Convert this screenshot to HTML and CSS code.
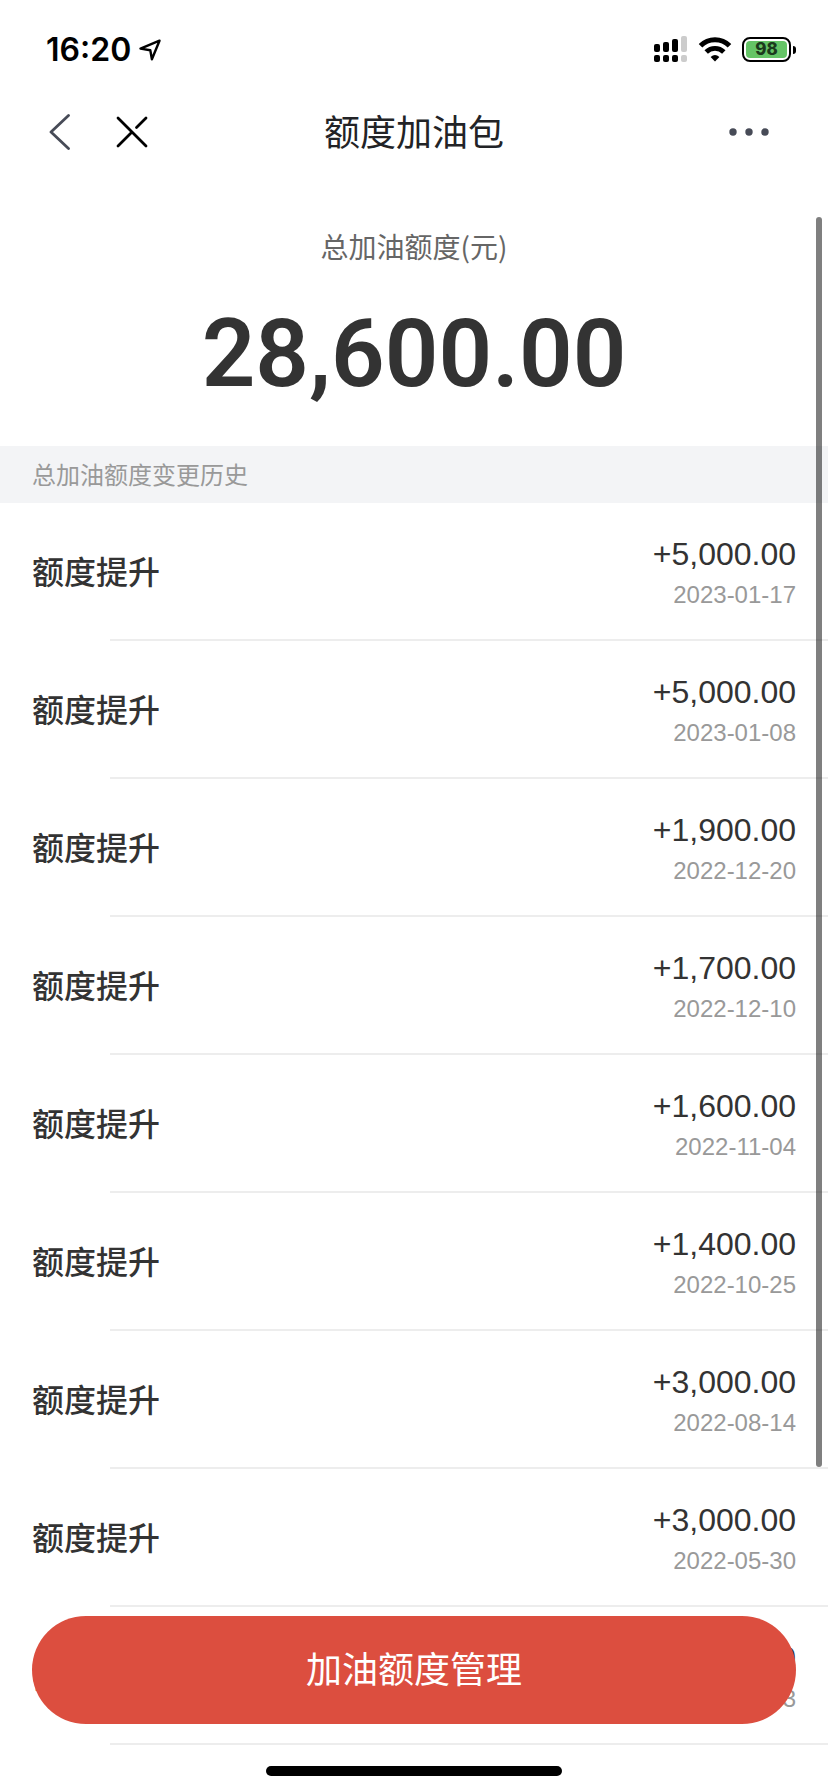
FILE: index.html
```html
<!DOCTYPE html>
<html lang="zh-CN">
<head>
<meta charset="utf-8">
<meta name="viewport" content="width=device-width, initial-scale=1">
<title>额度加油包</title>
<link rel="stylesheet" href="styles.css">
</head>
<body>
<div class="status-bar">
  <div class="status-left">
    <span class="time">16:20</span>
    <svg class="icon" width="24" height="24" viewBox="0 0 24 24" aria-hidden="true"><path d="M21.5 2.7 2.5 10.6 12.3 12.3 13.9 21.2Z" fill="none" stroke="#000" stroke-width="2.4" stroke-linejoin="round"/></svg>
  </div>
  <div class="status-right">
    <svg class="icon" width="34" height="26" viewBox="0 0 34 26" aria-hidden="true">
      <rect x="0" y="8" width="6" height="8" rx="2"/><rect x="9" y="6" width="6" height="10" rx="2"/><rect x="18" y="3" width="6" height="13" rx="2"/><rect x="27" y="0" width="6" height="16" rx="2" fill="#ccc"/>
      <rect x="0" y="19" width="6" height="7" rx="2"/><rect x="9" y="19" width="6" height="7" rx="2"/><rect x="18" y="19" width="6" height="7" rx="2"/><rect x="27" y="19" width="6" height="7" rx="2" fill="#ccc"/>
    </svg>
    <svg class="icon" width="34" height="26" viewBox="0 0 34 26" aria-hidden="true">
      <path d="M2.5 9.8A20.3 20.3 0 0 1 31.5 9.8" fill="none" stroke="#000" stroke-width="5"/>
      <path d="M8.2 16A12.4 12.4 0 0 1 25.8 16" fill="none" stroke="#000" stroke-width="4.8"/>
      <path d="M12.6 21Q17 17 21.4 21L17 25.5Z"/>
    </svg>
    <div class="battery"><span class="battery-level">98</span></div>
  </div>
</div>

<header class="nav">
  <div class="nav-left">
    <button class="icon-button" type="button" aria-label="返回">
      <svg class="icon" width="36" height="36" viewBox="0 0 36 36"><path d="M26.5 1.5 9 18 26.5 34.5" fill="none" stroke="#474b57" stroke-width="2.8" stroke-linecap="round" stroke-linejoin="round"/></svg>
    </button>
    <button class="icon-button" type="button" aria-label="关闭">
      <svg class="icon" width="36" height="36" viewBox="0 0 36 36"><path d="M4 4 32 32M32 4 22.5 13.5M4 32 17.5 18.5" fill="none" stroke="#000" stroke-width="2.8" stroke-linecap="round"/></svg>
    </button>
  </div>
  <h1 class="nav-title">额度加油包</h1>
  <button class="icon-button more" type="button" aria-label="更多">
    <svg class="icon" width="40" height="36" viewBox="0 0 40 36" fill="#474b57"><circle cx="4" cy="18" r="3.7"/><circle cx="20" cy="18" r="3.7"/><circle cx="36" cy="18" r="3.7"/></svg>
  </button>
</header>

<main>
  <section class="summary">
    <p class="summary-label">总加油额度(元)</p>
    <p class="summary-amount">28,600.00</p>
  </section>
  <h2 class="section-title">总加油额度变更历史</h2>
  <ul class="history">
    <li class="row"><span class="row-name">额度提升</span><div class="row-value"><span class="amount">+5,000.00</span><time class="date">2023-01-17</time></div></li>
    <li class="row"><span class="row-name">额度提升</span><div class="row-value"><span class="amount">+5,000.00</span><time class="date">2023-01-08</time></div></li>
    <li class="row"><span class="row-name">额度提升</span><div class="row-value"><span class="amount">+1,900.00</span><time class="date">2022-12-20</time></div></li>
    <li class="row"><span class="row-name">额度提升</span><div class="row-value"><span class="amount">+1,700.00</span><time class="date">2022-12-10</time></div></li>
    <li class="row"><span class="row-name">额度提升</span><div class="row-value"><span class="amount">+1,600.00</span><time class="date">2022-11-04</time></div></li>
    <li class="row"><span class="row-name">额度提升</span><div class="row-value"><span class="amount">+1,400.00</span><time class="date">2022-10-25</time></div></li>
    <li class="row"><span class="row-name">额度提升</span><div class="row-value"><span class="amount">+3,000.00</span><time class="date">2022-08-14</time></div></li>
    <li class="row"><span class="row-name">额度提升</span><div class="row-value"><span class="amount">+3,000.00</span><time class="date">2022-05-30</time></div></li>
    <li class="row"><span class="row-name">额度提升</span><div class="row-value"><span class="amount">0</span><time class="date">3</time></div></li>
  </ul>
</main>

<div class="scroll-thumb"></div>
<footer class="bottom-bar">
  <button class="primary" type="button">加油额度管理</button>
  <div class="home-indicator"></div>
</footer>
</body>
</html>
```
FILE: styles.css
```css
* {
  box-sizing: border-box;
  margin: 0;
  padding: 0;
}

body {
  min-height: 100vh;
  background: #fff;
  color: #333;
  font-family: "Liberation Sans", "Noto Sans CJK SC", sans-serif;
  overflow-x: hidden;
}

button {
  border: 0;
  background: none;
  font: inherit;
}

.icon {
  display: block;
}

.status-bar {
  display: flex;
  align-items: center;
  justify-content: space-between;
  height: 88px;
  padding: 10px 33px 0 46px;
  color: #000;
}

.status-left {
  display: flex;
  align-items: center;
  gap: 7px;
  padding-top: 2px;
}

.time {
  font: 600 32px/40px Inter, sans-serif;
}

.status-right {
  display: flex;
  align-items: center;
  gap: 10px;
}

.battery {
  position: relative;
  width: 49px;
  height: 25px;
  margin-right: 4px;
  padding: 2px;
  border: 2px solid #000;
  border-radius: 8px;
}

.battery::after {
  content: "";
  position: absolute;
  top: 7px;
  right: -7px;
  width: 3px;
  height: 8px;
  border-radius: 0 4px 4px 0;
  background: #000;
}

.battery-level {
  display: block;
  border-radius: 4px;
  background: #65c466;
  color: #1c3a1d;
  font: 800 17px/17px Inter, sans-serif;
  text-align: center;
}

.nav {
  display: grid;
  grid-template-columns: 1fr auto 1fr;
  align-items: center;
  height: 88px;
  padding: 0 42px;
}

.nav-left {
  display: flex;
  gap: 36px;
}

.nav-title {
  padding-bottom: 4px;
  color: #222326;
  font-family: "Noto Sans CJK SC", sans-serif;
  font-size: 36px;
  font-weight: 400;
  line-height: 52px;
}

.more {
  justify-self: end;
  margin-right: 17px;
}

.summary {
  padding: 50px 32px 44px;
  text-align: center;
}

.summary-label {
  color: #666;
  font-family: "Noto Sans CJK SC", sans-serif;
  font-size: 28px;
  line-height: 40px;
}

.summary-amount {
  margin-top: 40px;
  font: 600 94px/96px Roboto, sans-serif;
}

.section-title {
  padding: 8px 32px 9px;
  background: #f3f4f6;
  color: #999;
  font-family: "Noto Sans CJK SC", sans-serif;
  font-size: 24px;
  font-weight: 400;
  line-height: 40px;
}

.history {
  list-style: none;
}

.row {
  position: relative;
  display: flex;
  align-items: center;
  justify-content: space-between;
  padding: 30px 32px 32px;
}

.row::after {
  content: "";
  position: absolute;
  right: 0;
  bottom: 0;
  left: 110px;
  height: 2px;
  background: #ededed;
}

.row-name {
  padding-bottom: 2px;
  font-family: "Noto Sans CJK SC", sans-serif;
  font-size: 32px;
  font-weight: 500;
  line-height: 48px;
}

.row-value {
  display: flex;
  flex-direction: column;
  gap: 6px;
  text-align: right;
}

.amount {
  font-size: 32px;
  line-height: 42px;
}

.date {
  color: #999;
  font-size: 24px;
  line-height: 28px;
}

.scroll-thumb {
  position: fixed;
  top: 217px;
  right: 6px;
  bottom: 325px;
  width: 6px;
  border-radius: 3px;
  background: rgba(0, 0, 0, 0.5);
}

.bottom-bar {
  position: fixed;
  right: 0;
  bottom: 0;
  left: 0;
  display: flex;
  flex-direction: column;
  align-items: center;
  gap: 42px;
  padding: 0 32px 16px;
}

.primary {
  width: 100%;
  height: 108px;
  padding-bottom: 6px;
  border-radius: 54px;
  background: #dc4e3f;
  color: #fff;
  font-family: "Noto Sans CJK SC", sans-serif;
  font-size: 36px;
}

.home-indicator {
  width: 296px;
  height: 10px;
  border-radius: 5px;
  background: #000;
}
```
